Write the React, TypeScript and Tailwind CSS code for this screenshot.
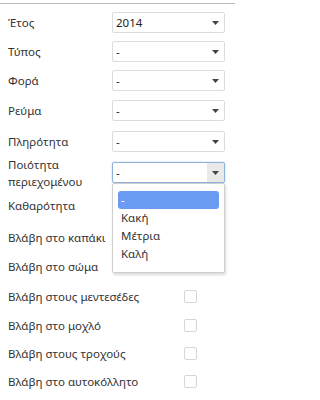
import { ReactNode } from 'react';

function Arrow() {
  return (
    <svg width="7" height="4" viewBox="0 0 7 4" className="shrink-0">
      <path d="M0 0h7L3.5 4z" fill="#444" />
    </svg>
  );
}

function SelectBox({ value, open = false }: { value: string; open?: boolean }) {
  return (
    <div
      className={
        open
          ? 'flex h-[21px] w-[113px] items-center rounded-[2px] border border-[#8fb2dc] bg-white pl-[3px] shadow-[0_0_2px_#b8cfea]'
          : 'flex h-[21px] w-[113px] items-center rounded-[2px] border border-[#dcdcdc] bg-white pl-[3px]'
      }
    >
      <span className="flex-1 truncate text-[11.5px] text-[#222]">{value}</span>
      <span
        className={
          open
            ? 'flex h-full w-[17px] items-center justify-center bg-[#e9e9e9]'
            : 'flex h-full w-[17px] items-center justify-center'
        }
      >
        <Arrow />
      </span>
    </div>
  );
}

function Checkbox() {
  return <div className="h-[13px] w-[13px] rounded-[2px] border border-[#d6d6d6] bg-white" />;
}

function Row({ label, children, className = '' }: { label: ReactNode; children?: ReactNode; className?: string }) {
  return (
    <div className={`flex h-[21px] items-center ${className}`}>
      <div className="w-[104px] shrink-0 text-[11.5px] leading-[17px] text-[#333]">{label}</div>
      {children}
    </div>
  );
}

function CheckRow({ label, className = '' }: { label: string; className?: string }) {
  return (
    <div className={`flex h-[21px] items-center ${className}`}>
      <div className="w-[176px] shrink-0 text-[11.5px] text-[#333]">{label}</div>
      <Checkbox />
    </div>
  );
}

export default function App() {
  const options = ['-', 'Κακή', 'Μέτρια', 'Καλή'];

  return (
    <div className="h-[400px] w-[235px] overflow-hidden bg-white pt-[3px] font-['Noto_Sans','Open_Sans',sans-serif]">
      <div className="flex flex-col border-t border-[#b9b9b9] px-[8px] pt-[8px]">
        <Row label="Έτος">
          <SelectBox value="2014" />
        </Row>
        <Row label="Τύπος" className="mt-[8px]">
          <SelectBox value="-" />
        </Row>
        <Row label="Φορά" className="mt-[8px]">
          <SelectBox value="-" />
        </Row>
        <Row label="Ρεύμα" className="mt-[9px]">
          <SelectBox value="-" />
        </Row>
        <Row label="Πληρότητα" className="mt-[10px]">
          <SelectBox value="-" />
        </Row>

        {/* open select with its option list laid over the rows below */}
        <Row
          label={
            <>
              Ποιότητα
              <br />
              περιεχομένου
            </>
          }
          className="relative mt-[10px]"
        >
          <SelectBox value="-" open />
          <div className="absolute left-[104px] top-[21px] z-10 w-[113px] rounded-[2px] border border-[#cfcfcf] bg-white px-[5px] pt-[7px] pb-[9px] shadow-[1px_2px_3px_rgba(0,0,0,0.15)]">
            {options.map((o, i) => (
              <div
                key={o}
                className={
                  i === 0
                    ? 'flex h-[18px] items-center rounded-[3px] bg-[#6b9bf2] pl-[3px] text-[11.5px] text-white'
                    : 'flex h-[18px] items-center pl-[3px] text-[11.5px] text-[#333]'
                }
              >
                {o}
              </div>
            ))}
          </div>
        </Row>

        <Row label="Καθαρότητα" className="mt-[12px]">
          <SelectBox value="-" />
        </Row>
        <CheckRow label="Βλάβη στο καπάκι" className="mt-[11px]" />
        <CheckRow label="Βλάβη στο σώμα" className="mt-[8px]" />
        <CheckRow label="Βλάβη στους μεντεσέδες" className="mt-[9px]" />
        <CheckRow label="Βλάβη στο μοχλό" className="mt-[8px]" />
        <CheckRow label="Βλάβη στους τροχούς" className="mt-[7px]" />
        <CheckRow label="Βλάβη στο αυτοκόλλητο" className="mt-[7px]" />
      </div>
    </div>
  );
}
